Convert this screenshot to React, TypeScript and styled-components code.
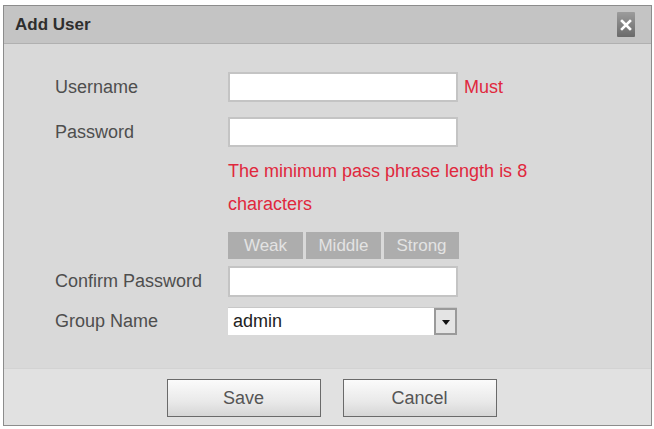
import styled, { createGlobalStyle } from 'styled-components'

const GlobalStyle = createGlobalStyle`
  html, body {
    margin: 0;
    padding: 0;
    background: #ffffff;
    font-family: "Liberation Sans", Arial, sans-serif;
  }
`

const Page = styled.div`
  padding: 5px 0 0 3px;
`

const Dialog = styled.div`
  width: 647px;
  border: 1px solid #8c8c8c;
  background: #d9d9d9;
`

const TitleBar = styled.div`
  height: 37px;
  display: flex;
  align-items: center;
  justify-content: space-between;
  padding: 0 16px 0 11px;
  background: #c4c4c4;
  border-bottom: 1px solid #b0b0b0;
`

const Title = styled.span`
  font-size: 17px;
  font-weight: bold;
  color: #2e2e2e;
`

const CloseButton = styled.div`
  width: 18px;
  height: 25px;
  display: flex;
  align-items: center;
  justify-content: center;
  background: linear-gradient(#9c9c9c, #6a6a6a);
  border-radius: 1px;
`

const Body = styled.div`
  height: 296px;
  padding: 28px 0 0 51px;
  display: flex;
  flex-direction: column;
`

const Row = styled.div<{ $top?: number }>`
  display: flex;
  align-items: center;
  margin-top: ${p => p.$top ?? 0}px;
`

const Label = styled.span`
  width: 173px;
  font-size: 18px;
  color: #4e4e4e;
`

const TextInput = styled.div<{ $h?: number }>`
  box-sizing: border-box;
  width: 230px;
  height: ${p => p.$h ?? 30}px;
  background: #ffffff;
  border: 2px solid #c4c4c4;
`

const Must = styled.span`
  margin-left: 6px;
  font-size: 18px;
  color: #e0283d;
`

const Hint = styled.div`
  margin: 8px 0 0 173px;
  width: 330px;
  font-size: 18px;
  line-height: 33px;
  color: #e0283d;
`

const Strength = styled.div`
  margin: 11px 0 0 173px;
  width: 231px;
  height: 27px;
  display: flex;
  gap: 3px;
`

const Segment = styled.div`
  flex: 1;
  display: flex;
  align-items: center;
  justify-content: center;
  background: #adadad;
  color: #e3e3e3;
  font-size: 17px;
`

const Select = styled.div`
  box-sizing: border-box;
  width: 229px;
  height: 28px;
  display: flex;
  align-items: stretch;
  background: #ffffff;
  border-top: 1px solid #c8c8c8;
`

const SelectValue = styled.span`
  flex: 1;
  padding-left: 5px;
  font-size: 18px;
  line-height: 27px;
  color: #222222;
`

const SelectArrow = styled.div`
  box-sizing: border-box;
  width: 23px;
  display: flex;
  align-items: center;
  justify-content: center;
  background: #e4e4e4;
  border: 2px solid #9a9a9a;

  &::after {
    content: '';
    border-left: 4px solid transparent;
    border-right: 4px solid transparent;
    border-top: 5px solid #111111;
    margin-top: 2px;
  }
`

const Footer = styled.div`
  height: 57px;
  display: flex;
  justify-content: center;
  gap: 22px;
  padding: 10px 0 0 8px;
  box-sizing: border-box;
  background: #e1e1e1;
  border-top: 1px solid #d3d3d3;
`

const Button = styled.div`
  box-sizing: border-box;
  width: 154px;
  height: 38px;
  display: flex;
  align-items: center;
  justify-content: center;
  border: 1px solid #6a6a6a;
  background: linear-gradient(#fbfbfb, #e9e9e9 60%, #d6d6d6);
  font-size: 18px;
  color: #555555;
`

const App = () => {
    return (
        <Page>
            <GlobalStyle />
            <Dialog>
                <TitleBar>
                    <Title>Add User</Title>
                    <CloseButton>
                        <svg width="12" height="12" viewBox="0 0 12 12">
                            <path d="M2 2 L10 10 M10 2 L2 10" stroke="#ffffff" strokeWidth="2.6" strokeLinecap="square" />
                        </svg>
                    </CloseButton>
                </TitleBar>
                <Body>
                    <Row>
                        <Label>Username</Label>
                        <TextInput />
                        <Must>Must</Must>
                    </Row>
                    <Row $top={15}>
                        <Label>Password</Label>
                        <TextInput />
                    </Row>
                    <Hint>The minimum pass phrase length is 8 characters</Hint>
                    <Strength>
                        <Segment>Weak</Segment>
                        <Segment>Middle</Segment>
                        <Segment>Strong</Segment>
                    </Strength>
                    <Row $top={7}>
                        <Label>Confirm Password</Label>
                        <TextInput $h={31} />
                    </Row>
                    <Row $top={10}>
                        <Label>Group Name</Label>
                        <Select>
                            <SelectValue>admin</SelectValue>
                            <SelectArrow />
                        </Select>
                    </Row>
                </Body>
                <Footer>
                    <Button>Save</Button>
                    <Button>Cancel</Button>
                </Footer>
            </Dialog>
        </Page>
    )
}

export default App
